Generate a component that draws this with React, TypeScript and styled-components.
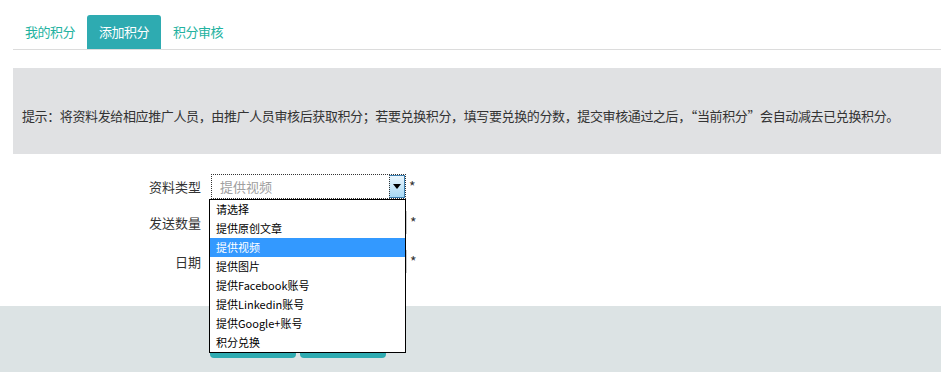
import { styled, createGlobalStyle } from "styled-components";

const GlobalStyle = createGlobalStyle`
  body {
    margin: 0;
    background: #fff;
    font-family: "Microsoft YaHei", "Noto Sans CJK SC", sans-serif;
    color: #333;
  }
`;

const TEAL = "#2eabb1";

const Page = styled.div`
  width: 941px;
  height: 372px;
  overflow: hidden;
  display: flex;
  flex-direction: column;
`;

const TabBar = styled.div`
  display: flex;
  margin: 15px 0 0 13px;
  height: 34px;
  border-bottom: 1px solid #dcdcdc;
`;

const Tab = styled.div<{ $active?: boolean }>`
  padding: 0 12px;
  line-height: 34px;
  font-size: 13px;
  letter-spacing: -0.5px;
  color: ${(p) => (p.$active ? "#fff" : "#23b2a0")};
  background: ${(p) => (p.$active ? TEAL : "transparent")};
  border-radius: 3px 3px 0 0;
`;

const Notice = styled.div`
  margin: 18px 0 0 13px;
  height: 86px;
  box-sizing: border-box;
  padding: 39px 9px 0;
  background: #e0e1e3;
  font-size: 13px;
  line-height: 18px;
  letter-spacing: -0.38px;
  color: #333;
  white-space: nowrap;
`;

const Form = styled.div`
  padding-top: 20px;
  display: flex;
  flex-direction: column;
`;

const Row = styled.div<{ $gap: number }>`
  display: flex;
  align-items: center;
  margin-top: ${(p) => p.$gap}px;
`;

const Label = styled.div`
  width: 201px;
  text-align: right;
  font-size: 13px;
  line-height: 18px;
  color: #333;
  margin-right: 10px;
`;

const SelectBox = styled.div`
  position: relative;
  width: 195px;
  height: 25px;
  box-sizing: border-box;
  border: 1px dotted #333;
  display: flex;
  align-items: center;
`;

const SelectValue = styled.div`
  flex: 1;
  padding-left: 8px;
  font-size: 13px;
  color: #a0a0a0;
`;

const ArrowButton = styled.div`
  width: 16px;
  height: 23px;
  box-sizing: border-box;
  border: 1px solid #3c7fb1;
  border-left: 1px dotted #333;
  background: linear-gradient(#eaf6fd, #a7d9f5);
  display: flex;
  align-items: center;
  justify-content: center;
  svg {
    display: block;
  }
`;

const TextInput = styled.div`
  width: 196px;
  height: 23px;
  box-sizing: border-box;
  border: 1px solid #c8c8c8;
`;

const Required = styled.span`
  margin-left: 3px;
  font-size: 14px;
  color: #333;
  line-height: 14px;
  position: relative;
  top: -1px;
`;

const DropList = styled.div`
  position: absolute;
  top: 24px;
  left: -3px;
  width: 197px;
  box-sizing: border-box;
  border: 1px solid #000;
  background: #fff;
  z-index: 5;
`;

const DropItem = styled.div<{ $selected?: boolean }>`
  height: 19px;
  line-height: 19px;
  padding-left: 6px;
  font-size: 11px;
  color: ${(p) => (p.$selected ? "#fff" : "#000")};
  background: ${(p) => (p.$selected ? "#3399ff" : "transparent")};
  white-space: nowrap;
`;

const Footer = styled.div`
  flex: 1;
  margin-top: 33px;
  background: #dce3e4;
  padding: 24px 0 0 210px;
  display: flex;
  gap: 4px;
  align-items: flex-start;
`;

const Button = styled.div`
  width: 86px;
  height: 28px;
  border-radius: 4px;
  background: ${TEAL};
`;

const options = [
  "请选择",
  "提供原创文章",
  "提供视频",
  "提供图片",
  "提供Facebook账号",
  "提供Linkedin账号",
  "提供Google+账号",
  "积分兑换",
];

export default function App() {
  return (
    <Page>
      <GlobalStyle />
      <TabBar>
        <Tab>我的积分</Tab>
        <Tab $active>添加积分</Tab>
        <Tab>积分审核</Tab>
      </TabBar>
      <Notice>
        提示：将资料发给相应推广人员，由推广人员审核后获取积分；若要兑换积分，填写要兑换的分数，提交审核通过之后，“当前积分”会自动减去已兑换积分。
      </Notice>
      <Form>
        <Row $gap={0}>
          <Label>资料类型</Label>
          <SelectBox>
            <SelectValue>提供视频</SelectValue>
            <ArrowButton>
              <svg width="8" height="5" viewBox="0 0 8 5">
                <path d="M0 0h8L4 5z" fill="#000" />
              </svg>
            </ArrowButton>
            <DropList>
              {options.map((o) => (
                <DropItem key={o} $selected={o === "提供视频"}>
                  {o}
                </DropItem>
              ))}
            </DropList>
          </SelectBox>
          <Required>*</Required>
        </Row>
        <Row $gap={12}>
          <Label>发送数量</Label>
          <TextInput />
          <Required>*</Required>
        </Row>
        <Row $gap={16}>
          <Label>日期</Label>
          <TextInput />
          <Required>*</Required>
        </Row>
      </Form>
      <Footer>
        <Button />
        <Button />
      </Footer>
    </Page>
  );
}
